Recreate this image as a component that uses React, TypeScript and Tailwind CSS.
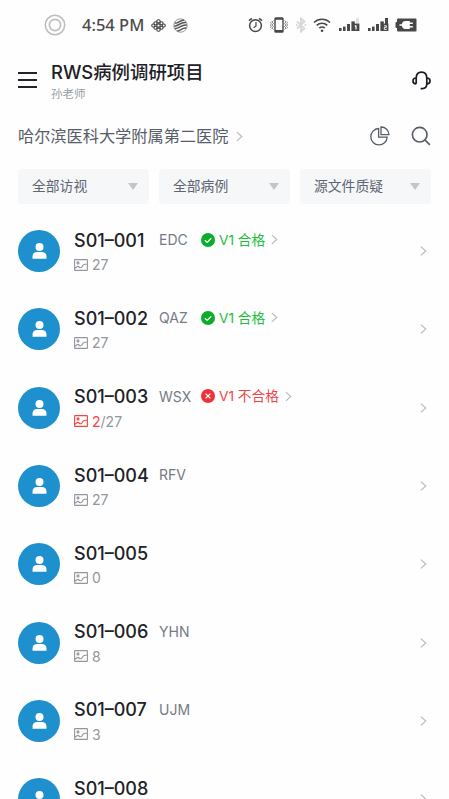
import React, { FC } from "react";

type Visit = {
  label: string;
  passed: boolean;
};

type Case = {
  code: string;
  initials?: string;
  total?: number;
  doubtful?: number;
  visit?: Visit;
};

const FILTERS = ["全部访视", "全部病例", "源文件质疑"];

const CASES: Case[] = [
  { code: "S01–001", initials: "EDC", total: 27, visit: { label: "V1 合格", passed: true } },
  { code: "S01–002", initials: "QAZ", total: 27, visit: { label: "V1 合格", passed: true } },
  { code: "S01–003", initials: "WSX", total: 27, doubtful: 2, visit: { label: "V1 不合格", passed: false } },
  { code: "S01–004", initials: "RFV", total: 27 },
  { code: "S01–005", total: 0 },
  { code: "S01–006", initials: "YHN", total: 8 },
  { code: "S01–007", initials: "UJM", total: 3 },
  { code: "S01–008" },
];

const Chevron: FC<{ className?: string }> = ({ className }) => (
  <svg className={className} viewBox="0 0 8 12" fill="none" stroke="currentColor" strokeWidth="1.4">
    <path d="M1 1l5.6 5L1 11" />
  </svg>
);

const SignalIcon: FC<{ full?: boolean }> = ({ full }) => (
  <svg className="h-4 w-[21px]" viewBox="0 0 21 16" fill="#484848">
    <rect x="0" y="11" width="2.6" height="3" />
    <rect x="4" y="9.6" width="2.6" height="4.4" />
    <rect x="8" y="7" width="3" height="7" />
    <rect x="12.4" y="4.4" width="3.4" height="9.6" />
    <rect x="17" y="1" width="3" height="7" fill={full ? "#484848" : "#e2e2e2"} />
    <rect x="13" y="6.6" width="7.4" height="7.4" />
    {full ? (
      <path d="M16 8.8h2.4v1.6H16.3v2h2.4" fill="none" stroke="#fff" strokeWidth="0.9" />
    ) : (
      <path d="M17 8.4v4.2M15.8 9.2L17 8.4" fill="none" stroke="#fff" strokeWidth="1.2" />
    )}
  </svg>
);

const StatusBar = () => (
  <div className="flex h-[50px] shrink-0 items-center">
    <svg className="ml-11 h-[22px] w-[22px]" viewBox="0 0 22 22" fill="none" stroke="#bcbcbc">
      <circle cx="11" cy="11" r="9.7" strokeWidth="1.5" />
      <circle cx="11" cy="11" r="5.6" strokeWidth="1.6" />
    </svg>
    <span className="ml-4 w-[63px] whitespace-nowrap font-['Noto_Sans'] text-[16.5px] font-medium leading-5 text-[#4b4b4b]">
      4:54 PM
    </span>
    {/* 运营商标志 */}
    <svg className="ml-[6px] h-[15px] w-[15px]" viewBox="0 0 15 15" fill="none" stroke="#444" strokeWidth="1.1">
      <rect x="5.9" y="1.7" width="3.2" height="3.2" rx="1.2" />
      <rect x="5.9" y="5.9" width="3.2" height="3.2" rx="1.2" />
      <rect x="5.9" y="10.1" width="3.2" height="3.2" rx="1.2" />
      <rect x="3" y="3.8" width="3" height="3" rx="1.2" />
      <rect x="9" y="3.8" width="3" height="3" rx="1.2" />
      <rect x="3" y="8.2" width="3" height="3" rx="1.2" />
      <rect x="9" y="8.2" width="3" height="3" rx="1.2" />
      <rect x="0.8" y="6" width="3" height="3" rx="1.2" />
      <rect x="11.2" y="6" width="3" height="3" rx="1.2" />
    </svg>
    <svg className="ml-[7px] h-[15px] w-[15px]" viewBox="0 0 15 15" fill="none" stroke="#555" strokeWidth="1.5">
      <circle cx="7.5" cy="7.5" r="6.7" strokeWidth="0.6" />
      <path d="M2 5C5 6 7 1.4 11 2.2M1.3 8C5 8.8 7.5 3.6 13 4.6M2 10.5C6 11.3 8.5 6 13.8 7.2M4.2 13C8 13 9.5 9 13.2 10" />
    </svg>
    <div className="ml-auto mr-[32px] flex items-center">
      <svg className="h-4 w-[15px]" viewBox="0 0 15 16" fill="none" stroke="#484848" strokeWidth="1.5">
        <circle cx="7.5" cy="8.6" r="5.9" />
        <path d="M8 5v4L5.6 10.8" strokeWidth="1.2" />
        <path d="M0.9 3.6L4 1.3M14.1 3.6L11 1.3" />
      </svg>
      <svg className="ml-[7px] h-4 w-[18px]" viewBox="0 0 18 16" fill="none" stroke="#484848">
        <rect x="5" y="1" width="8" height="14" rx="0.8" strokeWidth="1.4" />
        <path d="M5 1.8h8M5 14h8" strokeWidth="1.8" />
        <path
          d="M3.4 3.5L2 5l1.4 1.5L2 8l1.4 1.5L2 11l1.4 1.5M1.3 4.5L.5 5.5l.8 1.2L.5 8l.8 1.3-.8 1.2.8 1M14.6 3.5L16 5l-1.4 1.5L16 8l-1.4 1.5L16 11l-1.4 1.5M16.7 4.5l.8 1-.8 1.2.8 1.3-.8 1.3.8 1.2-.8 1"
          stroke="#6c6c6c"
          strokeWidth="0.8"
        />
      </svg>
      <svg className="ml-[7px] h-4 w-3" viewBox="0 0 12 16" fill="none" stroke="#d8d8d8" strokeWidth="1.9">
        <path d="M2 4.5l7.5 7L6 14.5v-13l3.5 3L2 11.5M1 8h1.4M9.6 8H11" />
      </svg>
      <svg className="ml-[6px] h-4 w-[18px]" viewBox="0 0 18 16" fill="none" stroke="#484848" strokeWidth="1.6">
        <path d="M1 5.5a11.5 11.5 0 0 1 16 0M3.7 8.4a7.6 7.6 0 0 1 10.6 0M6.3 11.2a4 4 0 0 1 5.4 0" />
        <circle cx="9" cy="13.7" r="1.3" fill="#484848" stroke="none" />
      </svg>
      <div className="ml-2 flex gap-2">
        <SignalIcon />
        <SignalIcon full />
      </div>
      <svg className="ml-[6px] h-[14px] w-[22px]" viewBox="0 0 22 14" fill="#484848">
        <path d="M3 .5h17.5q1 0 1 1v11q0 1-1 1H3q-1 0-1-1V10H1.5Q.5 10 .5 9V5q0-1 1-1H2V1.5q0-1 1-1z" />
        <path d="M4.5 6.3h2.4Q7.6 3 10.2 3h4.6v1.5h3V6h-3v2h3v1.500h-3V11h-4.600Q7.600 11 6.900 7.700H4.500z" fill="#fff" />
      </svg>
    </div>
  </div>
);

const ImageIcon = () => (
  <svg className="h-3 w-[14px] shrink-0" viewBox="0 0 14 12" fill="none" stroke="currentColor" strokeWidth="1.1">
    <rect x="0.6" y="0.6" width="12.8" height="10.8" rx="0.5" />
    <circle cx="4" cy="3.9" r="1" />
    <path d="M1 9.3l2-1.6Q4 7 5 8t2 .7Q8 8.4 8.5 7T11 5.2h2" />
  </svg>
);

const VisitBadge: FC<{ visit: Visit }> = ({ visit }) => (
  <span className={`flex items-center pb-0.5 ${visit.passed ? "text-[#20bd3c]" : "text-[#f04444]"}`}>
    <svg className="h-[14px] w-[14px]" viewBox="0 0 14 14">
      <circle cx="7" cy="7" r="7" fill={visit.passed ? "#09ad2b" : "#ee3338"} />
      <path
        d={visit.passed ? "M3.9 7.2l2.3 2.2 4.1-4.1" : "M4.6 4.6l4.8 4.8M9.4 4.6L4.6 9.4"}
        fill="none"
        stroke="#fff"
        strokeWidth="1.3"
      />
    </svg>
    <span className="ml-1 whitespace-nowrap text-[13.7px] leading-5">{visit.label}</span>
    <Chevron className="ml-[6px] h-[11px] w-[7px] text-[#b9bdc3]" />
  </span>
);

const CaseRow: FC<{ item: Case }> = ({ item }) => (
  <li className="flex h-[78.3px] shrink-0 items-center pl-[18px] pr-[22px]">
    <div className="flex h-[42px] w-[42px] shrink-0 items-center justify-center rounded-full bg-[#1e90cd]">
      <svg className="h-4 w-[15px]" viewBox="0 0 15 16" fill="#fff">
        <circle cx="7.5" cy="4" r="4" />
        <path d="M0.5 15.3v-1.5Q.5 9 5.3 9h4.4q4.8 0 4.8 4.8v1.5q0 .5-.5.5H1q-.5 0-.5-.5z" />
      </svg>
    </div>
    <div className="ml-[14px] flex-1 pt-px">
      <div className="flex h-6 items-center">
        <span className="w-[85px] text-[18px] font-medium leading-6 text-[#202227]">{item.code}</span>
        {item.initials && (
          <span className="w-[42px] pb-px text-[14px] leading-5 text-[#757b85]">{item.initials}</span>
        )}
        {item.visit && <VisitBadge visit={item.visit} />}
      </div>
      <div className="mt-0.5 flex h-5 items-center text-[14px] text-[#92969d]">
        {item.total !== undefined && (
          <>
            <span className={item.doubtful ? "text-[#f04444]" : ""}>
              <ImageIcon />
            </span>
            <span className="ml-1">
              {item.doubtful && <span className="text-[#f04444]">{item.doubtful}</span>}
              {item.doubtful ? `/${item.total}` : item.total}
            </span>
          </>
        )}
      </div>
    </div>
    <Chevron className="h-3 w-[7px] text-[#b9bdc3]" />
  </li>
);

export default function App() {
  return (
    <div className="flex h-[799px] w-[449px] flex-col overflow-hidden bg-[#fefefe] font-[Inter,'Noto_Sans_CJK_SC',sans-serif]">
      <StatusBar />
      <header className="flex h-[60px] shrink-0 items-center pl-[18px] pr-[18px]">
        <svg className="h-4 w-[19px]" viewBox="0 0 19 16" stroke="#22262c" strokeWidth="1.8">
          <path d="M0 1h19M0 8h19M0 15h19" />
        </svg>
        <div className="ml-[14px] flex-1 pt-[3px]">
          <h1 className="text-[18.4px] font-medium leading-6 text-[#1d2026]">RWS病例调研项目</h1>
          <p className="text-[11.5px] leading-5 text-[#969ca6]">孙老师</p>
        </div>
        <svg className="h-[19px] w-[19px]" viewBox="0 0 19 19" fill="none" stroke="#181c22" strokeWidth="1.7">
          <path d="M4.2 12.8V7.2C4.2 3.600 6.300 1.200 9.500 1.200S14.800 3.600 14.800 7.200v5.600c0 2.900-1.800 4.800-4.600 4.900H8.600" />
          <path d="M4.200 7Q1 7 1 9.900T4.200 12.800M14.800 7Q18 7 18 9.900t-3.200 2.900" />
        </svg>
      </header>
      <div className="flex h-[52px] shrink-0 items-center pl-[18px] pr-[18px] text-[#565c68]">
        <span className="whitespace-nowrap text-[16.2px] leading-6">哈尔滨医科大学附属第二医院</span>
        <Chevron className="ml-2 h-[11px] w-[7px] text-[#b9bdc3]" />
        <svg className="ml-auto h-5 w-5" viewBox="0 0 20 20" fill="none" stroke="currentColor" strokeWidth="1.3">
          <path d="M8.600 2.500A8.200 8.200 0 1 0 17.200 11.200H8.600z" />
          <path d="M11 1v7.700h8A7.800 7.800 0 0 0 11 1z" />
        </svg>
        <svg className="ml-[21px] h-5 w-5" viewBox="0 0 20 20" fill="none" stroke="currentColor" strokeWidth="1.6">
          <circle cx="8.7" cy="8.7" r="7.3" />
          <path d="M13.9 13.9l5 5" />
        </svg>
      </div>
      <div className="mt-[7px] flex shrink-0 gap-[10px] px-[18px]">
        {FILTERS.map((filter) => (
          <button
            key={filter}
            className="flex h-[35px] flex-1 items-center justify-between rounded bg-[#f5f7f9] pl-[14px] pr-[11px] text-[13.8px] text-[#5e6470]"
          >
            {filter}
            <svg className="h-[7px] w-[10px]" viewBox="0 0 10 7" fill="#c3c5ca">
              <path d="M0 0h10L5 7z" />
            </svg>
          </button>
        ))}
      </div>
      <ul className="mt-2 flex flex-col">
        {CASES.map((item) => (
          <CaseRow key={item.code} item={item} />
        ))}
      </ul>
    </div>
  );
}
